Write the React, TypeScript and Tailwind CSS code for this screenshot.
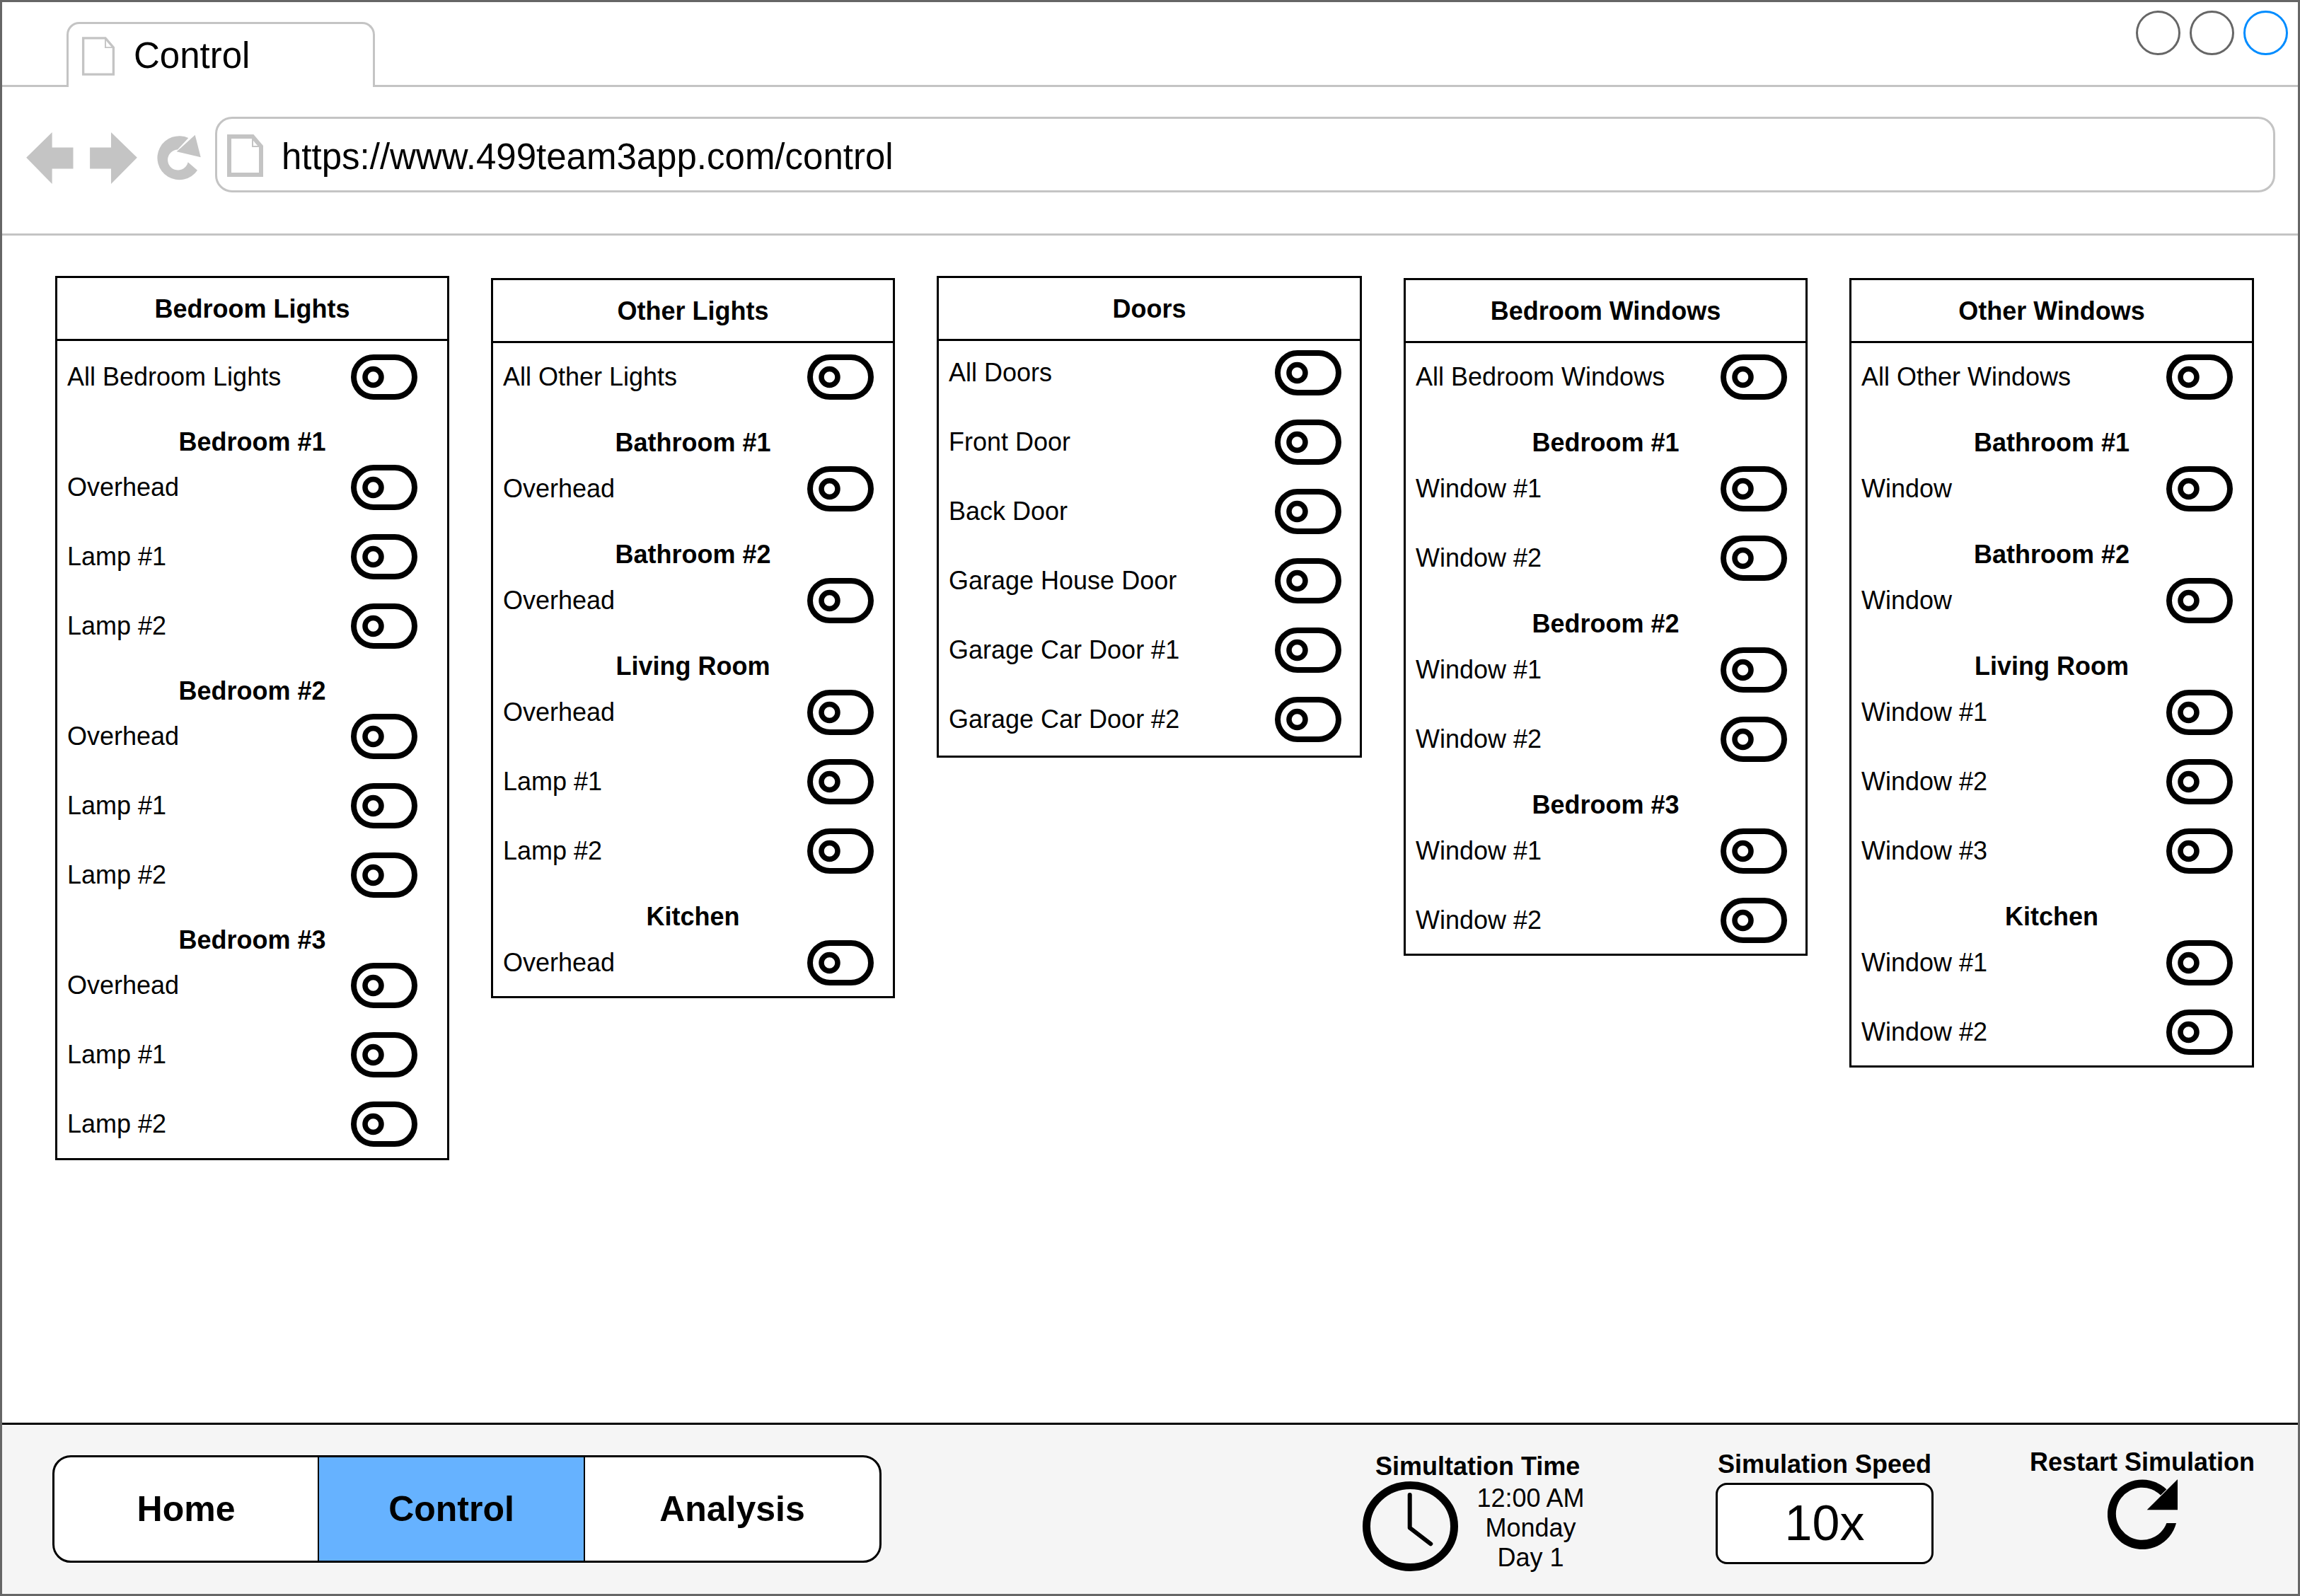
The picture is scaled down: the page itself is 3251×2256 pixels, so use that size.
import React from 'react';

type Item = { heading: string } | { label: string };

interface PanelDef {
  title: string;
  width: string;
  offset: string;
  bodyPad: string;
  toggleGap: string;
  headingGap: string;
  items: Item[];
}

const rows = (...labels: string[]): Item[] => labels.map((label) => ({ label }));
const head = (heading: string): Item => ({ heading });

const PANELS: PanelDef[] = [
  {
    title: 'Bedroom Lights',
    width: 'w-[557px]',
    offset: 'mt-[57px]',
    bodyPad: 'pt-[19px] pb-[16px]',
    toggleGap: 'pr-[42px]',
    headingGap: 'mt-[6px] mb-[12px]',
    items: [
      ...rows('All Bedroom Lights'),
      head('Bedroom #1'),
      ...rows('Overhead', 'Lamp #1', 'Lamp #2'),
      head('Bedroom #2'),
      ...rows('Overhead', 'Lamp #1', 'Lamp #2'),
      head('Bedroom #3'),
      ...rows('Overhead', 'Lamp #1', 'Lamp #2'),
    ],
  },
  {
    title: 'Other Lights',
    width: 'w-[571px]',
    offset: 'mt-[60px]',
    bodyPad: 'pt-[16px] pb-[15px]',
    toggleGap: 'pr-[27px]',
    headingGap: 'mt-[7px] mb-[13px]',
    items: [
      ...rows('All Other Lights'),
      head('Bathroom #1'),
      ...rows('Overhead'),
      head('Bathroom #2'),
      ...rows('Overhead'),
      head('Living Room'),
      ...rows('Overhead', 'Lamp #1', 'Lamp #2'),
      head('Kitchen'),
      ...rows('Overhead'),
    ],
  },
  {
    title: 'Doors',
    width: 'w-[601px]',
    offset: 'mt-[57px]',
    bodyPad: 'pt-[13px] pb-[19px]',
    toggleGap: 'pr-[26px]',
    headingGap: 'mt-[6px] mb-[12px]',
    items: rows(
      'All Doors',
      'Front Door',
      'Back Door',
      'Garage House Door',
      'Garage Car Door #1',
      'Garage Car Door #2',
    ),
  },
  {
    title: 'Bedroom Windows',
    width: 'w-[571px]',
    offset: 'mt-[60px]',
    bodyPad: 'pt-[16px] pb-[15px]',
    toggleGap: 'pr-[26px]',
    headingGap: 'mt-[7px] mb-[13px]',
    items: [
      ...rows('All Bedroom Windows'),
      head('Bedroom #1'),
      ...rows('Window #1', 'Window #2'),
      head('Bedroom #2'),
      ...rows('Window #1', 'Window #2'),
      head('Bedroom #3'),
      ...rows('Window #1', 'Window #2'),
    ],
  },
  {
    title: 'Other Windows',
    width: 'w-[572px]',
    offset: 'mt-[60px]',
    bodyPad: 'pt-[16px] pb-[15px]',
    toggleGap: 'pr-[27px]',
    headingGap: 'mt-[7px] mb-[13px]',
    items: [
      ...rows('All Other Windows'),
      head('Bathroom #1'),
      ...rows('Window'),
      head('Bathroom #2'),
      ...rows('Window'),
      head('Living Room'),
      ...rows('Window #1', 'Window #2', 'Window #3'),
      head('Kitchen'),
      ...rows('Window #1', 'Window #2'),
    ],
  },
];

function PageIcon({ className, weight }: { className: string; weight: number }) {
  return (
    <svg viewBox="0 0 51 60" className={className} fill="none" stroke="#c4c4c4" strokeWidth={weight}>
      <path d="M3 3 H36 L48 17 V57 H3 Z" />
      <path d="M36 3 V17 H48" strokeWidth="2" />
    </svg>
  );
}

function ToggleIcon() {
  return (
    <svg width="94" height="64" viewBox="0 0 94 64" fill="none" stroke="#000" className="shrink-0">
      <rect x="4" y="4" width="86" height="56" rx="28" strokeWidth="8" />
      <circle cx="31.5" cy="32" r="11.5" strokeWidth="7.5" />
    </svg>
  );
}

function Panel({ panel }: { panel: PanelDef }) {
  return (
    <section className={`shrink-0 border-[3px] border-black bg-white ${panel.width} ${panel.offset}`}>
      <h2 className="h-[89px] border-b-[3px] border-black text-center text-[36px] leading-[88px] font-bold">
        {panel.title}
      </h2>
      <div className={`flex flex-col ${panel.bodyPad}`}>
        {panel.items.map((item, i) =>
          'heading' in item ? (
            <h3
              key={i}
              className={`h-[40px] text-center text-[36px] leading-[40px] font-bold ${panel.headingGap}`}
            >
              {item.heading}
            </h3>
          ) : (
            <div
              key={i}
              className={`mb-[34px] flex h-[64px] items-center justify-between pl-[14px] last:mb-0 ${panel.toggleGap}`}
            >
              <span className="text-[36px] leading-[40px]">{item.label}</span>
              <ToggleIcon />
            </div>
          ),
        )}
      </div>
    </section>
  );
}

function BrowserChrome() {
  return (
    <>
      <div className="flex h-[120px] shrink-0 items-start border-b-[3px] border-[#c4c4c4]">
        <div className="z-10 mt-[28px] ml-[91px] -mb-[3px] flex h-[92px] w-[436px] items-start rounded-t-[18px] border-x-[3px] border-t-[3px] border-[#c4c4c4] bg-white pt-[17px] pl-[17px]">
          <PageIcon className="h-[57px] w-[50px]" weight={3.5} />
          <span className="ml-[25px] text-[51px] leading-[56px]">Control</span>
        </div>
        <div className="mt-[12px] mr-[14px] ml-auto flex gap-[13px]">
          <div className="h-[63px] w-[63px] rounded-full border-[3px] border-[#666]" />
          <div className="h-[63px] w-[63px] rounded-full border-[3px] border-[#666]" />
          <div className="h-[63px] w-[63px] rounded-full border-[3px] border-[#008cff]" />
        </div>
      </div>
      <div className="flex h-[210px] shrink-0 items-start border-b-[3px] border-[#c4c4c4]">
        <svg viewBox="0 0 157.3 73.3" className="mt-[64px] ml-[34px] h-[73px] w-[157px] shrink-0" fill="#c4c4c4">
          <polygon points="0,36 36.6,0 36.6,21.6 66.6,21.6 66.6,51.6 36.6,51.6 36.6,73.3" />
          <polygon points="90.3,21.6 120.3,21.6 120.3,0 157.3,36 120.3,73.3 120.3,51.6 90.3,51.6" />
        </svg>
        <svg viewBox="0 0 65 66" className="mt-[67px] ml-[25px] h-[66px] w-[65px] shrink-0" fill="#c4c4c4">
          <path d="M47.3 5 A31 31 0 1 0 60 50.7 L46.7 39.3 A14.5 14.5 0 1 1 32 21.5 Z" />
          <polygon points="56.7,0.7 64.7,32.3 30.7,24.3" />
        </svg>
        <div className="mt-[42px] ml-[20px] flex h-[107px] w-[2912px] items-center rounded-[24px] border-[3px] border-[#c4c4c4] pl-[14px]">
          <PageIcon className="mt-[3px] h-[60px] w-[51px]" weight={6} />
          <span className="mt-[7px] ml-[26px] text-[51px] leading-[56px]">https://www.499team3app.com/control</span>
        </div>
      </div>
    </>
  );
}

function Footer() {
  return (
    <footer className="-mb-[3px] flex h-[245px] shrink-0 items-start border-y-[3px] border-black bg-[#f5f5f5]">
      <nav className="mt-[43px] ml-[71px] flex h-[152px] w-[1172px] overflow-hidden rounded-[26px] border-[3px] border-black bg-white text-center text-[50px] leading-[146px] font-bold">
        <div className="w-[374px] border-r-[2px] border-black">Home</div>
        <div className="w-[376px] border-r-[2px] border-black bg-[#66b2ff]">Control</div>
        <div className="flex-1">Analysis</div>
      </nav>

      <div className="mt-[39px] ml-[680px] w-[342px] shrink-0">
        <div className="pl-[18px] text-[36px] leading-[40px] font-bold">Simultation Time</div>
        <div className="mt-[1px] flex">
          <svg viewBox="0 0 135 127" className="h-[127px] w-[135px] shrink-0" fill="none" stroke="#000">
            <ellipse cx="67.5" cy="63.5" rx="62" ry="58" strokeWidth="11" />
            <path d="M66.7 19 V65.7 L96.3 88.3" strokeWidth="6" strokeLinecap="round" strokeLinejoin="round" />
          </svg>
          <div className="flex-1 pt-[3px] pr-[2px] text-center text-[36px] leading-[42px]">
            <div>12:00 AM</div>
            <div>Monday</div>
            <div>Day 1</div>
          </div>
        </div>
      </div>

      <div className="mt-[36px] ml-[157px] w-[308px] shrink-0 text-center">
        <div className="text-[36px] leading-[40px] font-bold">Simulation Speed</div>
        <div className="mt-[6px] h-[115px] rounded-[16px] border-[3px] border-black bg-white text-[70px] leading-[109px]">
          10x
        </div>
      </div>

      <div className="mt-[33px] ml-[137px] flex w-[316px] shrink-0 flex-col items-center">
        <div className="text-[36px] leading-[40px] font-bold whitespace-nowrap">Restart Simulation</div>
        <svg viewBox="0 0 99 99" className="mt-[4px] h-[99px] w-[99px]" fill="#000">
          <path d="M83.4 14.3 A49.3 49.3 0 1 0 97 62 H83.4 A37 37 0 1 1 75 22.6 Z" />
          <polygon points="99,0 99,43.3 55.7,43.3" />
        </svg>
      </div>
    </footer>
  );
}

export default function App() {
  return (
    <div className="flex h-[2256px] w-[3251px] flex-col overflow-hidden border-[3px] border-[#666] bg-white font-['Liberation_Sans',Arial,sans-serif] text-black">
      <BrowserChrome />
      <main className="flex min-h-0 flex-1 items-start gap-[59px] pl-[75px]">
        {PANELS.map((panel) => (
          <Panel key={panel.title} panel={panel} />
        ))}
      </main>
      <Footer />
    </div>
  );
}
